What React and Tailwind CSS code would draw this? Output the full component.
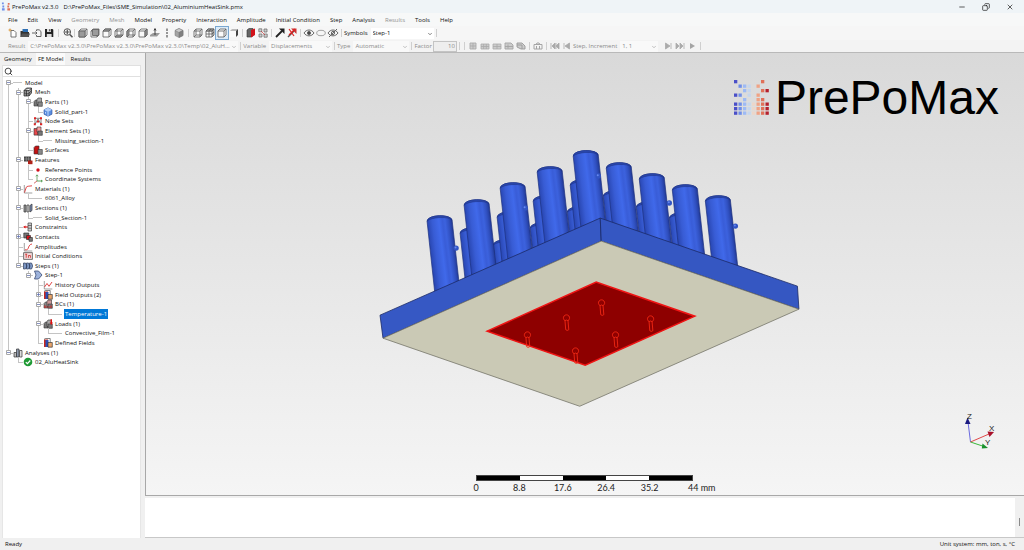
import React from "react";
import clsx from "clsx";
import { Search, Minus, Copy, X, ChevronDown } from "lucide-react";

const menus = [
  "File",
  "Edit",
  "View",
  "Geometry",
  "Mesh",
  "Model",
  "Property",
  "Interaction",
  "Amplitude",
  "Initial Condition",
  "Step",
  "Analysis",
  "Results",
  "Tools",
  "Help",
];
const disabledMenus = ["Geometry", "Mesh", "Results"];

const tree = [
  { d: 0, text: "Model", box: "-" },
  { d: 1, text: "Mesh", icon: "mesh", box: "-" },
  { d: 2, text: "Parts (1)", icon: "parts", box: "-" },
  { d: 3, text: "Solid_part-1", icon: "part" },
  { d: 2, text: "Node Sets", icon: "nodes" },
  { d: 2, text: "Element Sets (1)", icon: "elements", box: "-" },
  { d: 3, text: "Missing_section-1" },
  { d: 2, text: "Surfaces", icon: "surfaces" },
  { d: 1, text: "Features", icon: "features", box: "-" },
  { d: 2, text: "Reference Points", icon: "point" },
  { d: 2, text: "Coordinate Systems", icon: "axes" },
  { d: 1, text: "Materials (1)", icon: "curve", box: "-" },
  { d: 2, text: "6061_Alloy" },
  { d: 1, text: "Sections (1)", icon: "sections", box: "-" },
  { d: 2, text: "Solid_Section-1" },
  { d: 1, text: "Constraints", icon: "constraints" },
  { d: 1, text: "Contacts", icon: "contacts", box: "+" },
  { d: 1, text: "Amplitudes", icon: "amplitude" },
  { d: 1, text: "Initial Conditions", icon: "initial" },
  { d: 1, text: "Steps (1)", icon: "steps", box: "-" },
  { d: 2, text: "Step-1", icon: "step", box: "-" },
  { d: 3, text: "History Outputs", icon: "history" },
  { d: 3, text: "Field Outputs (2)", icon: "field", box: "+" },
  { d: 3, text: "BCs (1)", icon: "bcs", box: "-" },
  { d: 4, text: "Temperature-1", selected: true },
  { d: 3, text: "Loads (1)", icon: "loads", box: "-" },
  { d: 4, text: "Convective_Film-1" },
  { d: 3, text: "Defined Fields", icon: "field" },
  { d: 0, text: "Analyses (1)", icon: "analyses", box: "-" },
  { d: 1, text: "02_AluHeatSink", icon: "ok" },
];

// true when the branch line of a level goes on below row i
const continues = (i, level) => {
  for (let j = i + 1; j < tree.length; j++) {
    if (tree[j].d < level) return false;
    if (tree[j].d === level) return true;
  }
  return false;
};

const Blocks = ({ a, b, c }) => (
  <g stroke="#333" strokeWidth="0.6">
    <path d="M1 4.5 2.5 3H5v6H1z" fill={a} />
    <path d="M4 2.5 5 1h3.5v5.5l-1 1H4z" fill={b} />
    <path d="M5 5h4.3v4.3H5z" fill={c} />
  </g>
);

const treeIcons = {
  mesh: (
    <g stroke="#222" strokeWidth="0.7">
      <path d="M1 3.5h5v5.5H1zM6 3.5 8.5 1v5L6 9M1 3.5 3.5 1h5M1 6h5l2.5-2.5M3.5 3.5V9" fill="#8a8a8a" />
    </g>
  ),
  parts: <Blocks a="#777" b="#aaa" c="#888" />,
  part: (
    <g>
      <path d="M5 .8 9 2.8v4.4l-4 2-4-2V2.8z" fill="#5b8fe0" stroke="#2c4f9c" strokeWidth="0.6" />
      <path d="M5 .8 9 2.8 5 5 1 2.8z" fill="#b5d0f8" />
      <path d="M2.5 5v1.6M5 5v4" stroke="#dbe8ff" strokeWidth="0.8" />
    </g>
  ),
  nodes: (
    <g>
      <path d="M2 2.3h6v5.5M2 8.5 5 3l3 5M2 2v6" fill="none" stroke="#666" strokeWidth="0.8" />
      <path d="M1 1.2h2v2H1zM7 1.2h2v2H7zM.8 7.2h2v2h-2zM7 7.2h2.2v2H7zM4 4.6h2v2H4z" fill="#d22" />
    </g>
  ),
  elements: (
    <g stroke="#333" strokeWidth="0.6">
      <path d="M1 2.5h4v6.6H1z" fill="#e8484a" />
      <path d="M4 1h4v5H4z" fill="#f3a0a0" />
      <path d="M5 5h4.3v4.3H5z" fill="#777" />
    </g>
  ),
  surfaces: (
    <g stroke="#333" strokeWidth="0.6">
      <path d="M1 2.5 2.5 1H6v8H1z" fill="#c41212" />
      <path d="M5 4.5h4.3v4.8H5z" fill="#8a8a8a" />
    </g>
  ),
  features: (
    <g>
      <path d="M1 1.5h7v5H1z" fill="#444" />
      <path d="M1 4h7M3.3 1.5v5M5.6 1.5v5" stroke="#aaa" strokeWidth="0.5" />
      <path d="M5 5.5h4.5v3.7H5z" fill="#b02218" />
    </g>
  ),
  point: <circle cx="5" cy="5" r="1.7" fill="#d0101c" />,
  axes: (
    <g fill="none" strokeWidth="0.8">
      <path d="M4 7V1M2.8 2.3 4 .8l1.2 1.5" stroke="#5a9a5a" />
      <path d="M4 7h5.2M8 6l1.3 1L8 8.2" stroke="#3b8f3b" />
      <path d="M4 7 1 9.3" stroke="#c44" />
    </g>
  ),
  curve: (
    <g fill="none">
      <path d="M1.3 1v8h8" stroke="#777" strokeWidth="0.7" />
      <path d="M1.5 8.5 3.3 3.2C4 2 6 2.3 9 1.8" stroke="#d33" strokeWidth="0.9" />
    </g>
  ),
  sections: (
    <g stroke="#333" strokeWidth="0.7">
      <path d="M1 2h2v7H1z" fill="#999" />
      <path d="M4 2h2v7H4z" fill="#ddd" />
      <path d="M7 2.5 9 1v6.5L7 9z" fill="#7b8fb8" />
    </g>
  ),
  constraints: (
    <g>
      <path d="M1 5h4" stroke="#d22" strokeWidth="1.2" />
      <path d="M0 5l2.5-1.5v3z" fill="#d22" />
      <path d="M5 1h3.5v8H5zM5 3.5h3.5M5 6.2h3.5" fill="#ccc" stroke="#444" strokeWidth="0.7" />
    </g>
  ),
  contacts: (
    <g stroke="#222" strokeWidth="0.6">
      <path d="M.8 1h5v5h-5z" fill="#777" />
      <path d="M3.5 3.5h4v4h-4z" fill="#d8151b" />
      <path d="M6 5.5h3.4v3.8H6z" fill="#777" />
    </g>
  ),
  amplitude: (
    <g fill="none">
      <path d="M1.3 1v8h8" stroke="#777" strokeWidth="0.7" />
      <path d="M2 7.8h1.6C6 7.5 5 2.5 9 2" stroke="#d33" strokeWidth="0.9" />
    </g>
  ),
  initial: (
    <g fill="none" strokeWidth="0.8">
      <path d="M.6 1.6h8.8v6.8H.6z" stroke="#555" fill="#f3dada" />
      <path d="M2.2 3.2h2M3.2 3.2v3.6M5.4 4.5v2.3M7.4 4.5v2.3M5.4 4.5h2" stroke="#c22" />
    </g>
  ),
  steps: (
    <g fill="#7d97c4" stroke="#2f3d5c" strokeWidth="0.7">
      <path d="M.5 2h2L4 5 2.5 8h-2zM3.5 2h2L7 5 5.5 8h-2zM6.5 2h2L9.8 5 8.5 8h-2z" />
    </g>
  ),
  step: <path d="M1.5 1h4L9 5 5.5 9h-4L3 5z" fill="#9db3dc" stroke="#3b4d75" strokeWidth="0.8" />,
  history: (
    <g fill="none">
      <path d="M1.3 1v8h8" stroke="#777" strokeWidth="0.7" />
      <path d="M1.5 7 4 3.5l2 2.8L9 2" stroke="#d33" strokeWidth="0.9" />
    </g>
  ),
  field: (
    <g>
      <path d="M1 1.5h4V9H1z" fill="#c9281c" />
      <path d="M2.5 2h3v7h-3z" fill="#2d4fb5" />
      <path d="M5 4.5h4.3v4.7H5z" fill="#e8a46a" stroke="#222" strokeWidth="0.6" />
      <path d="M1 1.5 2.2.5h5v4" fill="none" stroke="#333" strokeWidth="0.6" />
    </g>
  ),
  bcs: (
    <g>
      <Blocks a="#888" b="#c99" c="#777" />
      <path d="M1 8h8M2 6v3M8 6v3" stroke="#c22" strokeWidth="0.7" />
    </g>
  ),
  loads: (
    <g>
      <Blocks a="#777" b="#aaa" c="#777" />
      <path d="M8.3.3v4" stroke="#d11" strokeWidth="1.4" />
      <path d="M6.6 3.6H10L8.3 6z" fill="#d11" />
    </g>
  ),
  analyses: (
    <g stroke="#333" strokeWidth="0.7">
      <path d="M1 4.5h2.5V9H1z" fill="#bbb" />
      <path d="M3.5 1H6v8H3.5z" fill="#8d99ad" />
      <path d="M6.5 2.5H9V9H6.5z" fill="#ddd" />
    </g>
  ),
  ok: (
    <g>
      <circle cx="5" cy="5" r="4.3" fill="#1f9a35" />
      <path d="M2.8 5.1 4.4 6.7 7.3 3.5" fill="none" stroke="#fff" strokeWidth="1.2" />
    </g>
  ),
};

const Cube = ({ shade, fill = "#9a9a9a", extra }) => (
  <g stroke="#5c5c5c" strokeWidth="0.8">
    <path d="M2 4h6v6H2zM2 4l2-2h6v6l-2 2M8 4l2-2" fill="#fafafa" />
    {shade && <path d={shade} fill={fill} />}
    {extra && <path d={extra} fill="none" />}
  </g>
);

const toolIcons = {
  New: (
    <g fill="#fff" stroke="#555" strokeWidth="0.8">
      <path d="M4 3.5h3L9 5.5V10H4z" />
      <path d="M3 1.5v3M1.5 3h3" stroke="#d98b1d" />
    </g>
  ),
  Open: (
    <g>
      <path d="M3.5 2H9v4H3.5z" fill="#2d6fb3" />
      <path d="M1.5 4h2l1 1H10v5H1.5z" fill="#333" />
      <path d="M3 6.5h8L9.5 10h-8z" fill="#555" />
    </g>
  ),
  Import: (
    <g fill="none" stroke="#555" strokeWidth="0.9">
      <path d="M5.5 4V2.8h2.7L10 4.5v5H5.5V8M1 6h5M4.5 4.5 6 6 4.5 7.5" />
    </g>
  ),
  Save: (
    <g>
      <path d="M2 2h7.5l.8.8V10H2z" fill="#222" />
      <path d="M4 2h4v3H4zM3.8 7h4.8v3H3.8z" fill="#ddd" />
      <path d="M6.3 2.3h1v2h-1z" fill="#222" />
    </g>
  ),
  "Zoom to fit": (
    <g fill="none" stroke="#555" strokeWidth="1">
      <circle cx="5.3" cy="5" r="3.3" />
      <path d="M5.3 2.5v5M2.8 5h5" strokeWidth="1.2" />
      <path d="M7.8 7.5l2.7 2.8" strokeWidth="1.6" />
    </g>
  ),
  Front: <Cube shade="M2 4h6v6H2z" />,
  Back: <Cube shade="M3.5 2.5h6v6h-6z" />,
  Top: <Cube shade="M2 4l2-2h6L8 4z" />,
  Bottom: <Cube shade="M2 10l2-2h6l-2 2z" extra="M4 2v6" />,
  Left: <Cube shade="M2 4l2-2v6l-2 2z" extra="M4 8h6" />,
  Right: <Cube shade="M8 4l2-2v6l-2 2z" />,
  "Normal view": (
    <g>
      <path d="M1 8l3-2h7L8 9.5H1z" fill="#9a9a9a" />
      <path d="M6 8V2M5 3.5l1-2 1 2" fill="none" stroke="#333" strokeWidth="0.9" />
    </g>
  ),
  "Vertical view": <path d="M6 1.5V4M6 5v2M6 8v2.5" stroke="#555" strokeWidth="1.2" />,
  Isometric: (
    <g stroke="#777" strokeWidth="0.5">
      <path d="M6 1.5l4 2v5l-4 2-4-2v-5z" fill="#a4a4a4" />
      <path d="M6 1.5l4 2-4 2-4-2z" fill="#ccc" />
      <path d="M6 5.5l4-2v5l-4 2z" fill="#808080" />
    </g>
  ),
  Wireframe: <Cube extra="M4 2v6h6M4 8l-2 2" />,
  "Element edges": <Cube extra="M5 4v6M2 7h6M7 2 5 4M8 7l2-2M3 3h6v6" shade="M2 4l2-2h6L8 4z" fill="#ccc" />,
  "Model edges": <Cube />,
  "No edges": (
    <g>
      <path d="M2 4l2-2h6L8 4z" fill="#bbb" />
      <path d="M8 4l2-2v6l-2 2z" fill="#444" />
      <path d="M2 4h6v6H2z" fill="#fbfbfb" />
    </g>
  ),
  "Section view": (
    <g>
      <path d="M2 3l2-1.5h4V9l-2 1H2z" fill="#666" stroke="#333" strokeWidth="0.6" />
      <path d="M6 3l4-1.5V8l-4 2.5z" fill="#d3121a" />
    </g>
  ),
  "Exploded view": (
    <g stroke="#666" strokeWidth="0.7">
      <path d="M1.8 1.8h3v3h-3zM7 2h3v3H7zM2 7h3v3H2zM7 7h3.2v3.2H7z" fill="#ccc" />
      <path d="M4 4l4 4" stroke="#c33" />
    </g>
  ),
  Query: (
    <g>
      <path d="M2 10l6-6" stroke="#222" strokeWidth="1.8" />
      <path d="M5 1.500h5.500V7z" fill="#222" />
    </g>
  ),
  "Remove annotations": (
    <g>
      <path d="M2 10l6-6" stroke="#555" strokeWidth="1.4" />
      <path d="M5 1.5h5.5V7z" fill="#c33" />
      <path d="M3 2l5 7M9 2 3 8" stroke="#e02020" strokeWidth="1.2" />
    </g>
  ),
  Show: (
    <g fill="none" stroke="#666" strokeWidth="1">
      <path d="M1 6c2.5-4 7.5-4 10 0-2.500 3.800-7.500 3.800-10 0z" />
      <circle cx="6" cy="6" r="1.600" fill="#444" />
    </g>
  ),
  Hide: <ellipse cx="6" cy="6" rx="4.3" ry="2.7" fill="none" stroke="#999" strokeWidth="0.9" />,
  Invert: (
    <g fill="none" stroke="#666" strokeWidth="1">
      <path d="M1 6c2.5-4 7.5-4 10 0-2.500 3.800-7.500 3.800-10 0z" />
      <circle cx="6" cy="6" r="1.600" />
      <path d="M2 10l8-8" />
    </g>
  ),
  "Original shape": <path d="M3 3h6v6H3zM3 6h6M6 3v6" fill="#ccc" stroke="#aaa" strokeWidth="0.9" />,
  Undeformed: <path d="M2 4h8v5H2zM2 6.5h8M4.600 4v5M7.300 4v5" fill="#ccc" stroke="#aaa" strokeWidth="0.8" />,
  Deformed: <path d="M2 4h8v5H2zM2 6.5h8M6 4v5" fill="#ccc" stroke="#aaa" strokeWidth="0.8" />,
  "Color contours": <path d="M2 4.5V9h8V5L8 3H2zM2 6.5h8M5 4.5v4" fill="#ccc" stroke="#a4a4a4" strokeWidth="0.9" />,
  Wire: <path d="M2 3h5l3 3v3H6L2 7zM2 5h5v4" fill="#ccc" stroke="#999" strokeWidth="0.9" />,
  Animate: <path d="M2 4.5h8V9H2zM4 4.5 5 3h2l1 1.500M4.500 6v3M7.500 6v3" fill="none" stroke="#a4a4a4" strokeWidth="1" />,
  First: <path d="M2 3v6M6 3v6L3 6zM10 3v6L7 6zM7 3v6" fill="#aaa" stroke="#aaa" strokeWidth="0.8" />,
  Previous: <path d="M3 3v6M8.5 3v6L4 6z" fill="#aaa" stroke="#aaa" strokeWidth="0.8" />,
  Next: <path d="M9 3v6M3.5 3v6L8 6z" fill="#aaa" stroke="#aaa" strokeWidth="0.8" />,
  Last: <path d="M10 3v6M2 3v6l3-3zM6 3v6l3-3z" fill="#aaa" stroke="#aaa" strokeWidth="0.8" />,
  Play: <path d="M4 3v6l5-3z" fill="#a4a4a4" />,
};

const Tool = ({ name, active, disabled }) => (
  <button
    type="button"
    aria-label={name}
    disabled={disabled}
    className={clsx("h-3 w-3 shrink-0", active && "bg-[#dcebf8] outline outline-[#7aa7d0]")}
  >
    <svg viewBox="0 0 12 12" className="h-3 w-3">
      {toolIcons[name]}
    </svg>
  </button>
);

const Sep = () => <div className="mx-[2px] h-2 w-px shrink-0 bg-[#cfcfcf]" />;

const Combo = ({ id, label, value, width, disabled }) => (
  <>
    <label htmlFor={id} className="shrink-0">
      {label}
    </label>
    <div className={clsx("relative ml-[3px] shrink-0", width, disabled ? "bg-[#f9f9f9]" : "bg-white")}>
      <select
        id={id}
        disabled={disabled}
        className="block h-[11px] w-full appearance-none truncate pr-2 pl-[2px] opacity-100"
      >
        <option>{value}</option>
      </select>
      <ChevronDown className="pointer-events-none absolute top-[3px] right-px h-[6px] w-[6px]" />
    </div>
  </>
);

const logo = ["0.....6.", ".123.5..", "..23..67", "01.3.5..", "..2..56.", "01234567", "01234567", "01234567"];
const logoColors = ["#4a4fc8", "#6f8ee8", "#9dbaf5", "#c5d6ee", "#ecd6c9", "#f0a284", "#e07058", "#b5202c"];

const Logo = () => (
  <div className="absolute top-[19px] right-[25px] flex items-center gap-[6px]">
    <svg viewBox="0 0 35 36" className="h-9 w-[35px]" role="img" aria-label="logo">
      {logo.map((row, y) =>
        [...row].map(
          (c, x) =>
            c !== "." && (
              <rect key={`${x}-${y}`} x={x * 4.5} y={y * 4.5} width="3.3" height="3.3" fill={logoColors[c]} />
            )
        )
      )}
    </svg>
    <span className="font-['Liberation_Sans',sans-serif] text-[48px] leading-[52px] text-black">PrePoMax</span>
  </div>
);

// back rows first, so the front ones cover them
const pins = [
  [493, 244],
  [530, 227],
  [567, 211],
  [460, 232],
  [497, 216],
  [533, 200],
  [570, 184],
  [603, 195],
  [636, 206],
  [669, 217],
  [427, 220],
  [464, 204],
  [500, 187],
  [537, 171],
  [606, 167],
  [639, 178],
  [672, 189],
  [705, 200],
  [573, 155],
];
const balls = [
  [456, 248],
  [525, 208],
  [598, 176],
  [669, 203],
  [735, 226],
];
const symbols = [
  [601, 303],
  [566, 318],
  [650, 319],
  [615, 335],
  [527, 335],
  [575, 351],
];

const HeatSink = () => (
  <svg viewBox="379 148 421 260" className="mt-2 ml-[9px] w-[48%]" role="img" aria-label="Heat sink">
    <defs>
      <linearGradient id="pin" gradientUnits="userSpaceOnUse" x1="0" y1="0" x2="25" y2="-3">
        <stop offset="0" stopColor="#2a48b4" />
        <stop offset="0.2" stopColor="#385cd4" />
        <stop offset="0.46" stopColor="#4069ea" />
        <stop offset="0.6" stopColor="#395dd8" />
        <stop offset="0.7" stopColor="#3c62de" />
        <stop offset="0.85" stopColor="#3050c0" />
        <stop offset="1" stopColor="#1f3690" />
      </linearGradient>
    </defs>
    {pins.map(([x, y]) => (
      <g key={`${x}-${y}`} transform={`translate(${x} ${y})`}>
        <path d="M0 1C1-6 24-6 25 0L33 72 8 75z" fill="url(#pin)" stroke="#1d3080" strokeWidth="0.7" />
        <path d="M0 1C1-6 24-6 25 0 22-4 4-3 0 1z" fill="#2b48ae" stroke="#1d3080" strokeWidth="0.5" />
      </g>
    ))}
    {balls.map(([x, y]) => (
      <g key={x}>
        <circle cx={x} cy={y} r="2.7" fill="#3154c4" />
        <circle cx={x - 0.5} cy={y - 0.7} r="1" fill="#6688ee" />
      </g>
    ))}
    <g stroke="#1c2b66" strokeWidth="0.8" strokeLinejoin="round">
      <path d="M380 315 600 218 601 241 383 338z" fill="#3658c4" />
      <path d="M600 218 797 286 798.5 309 601 241z" fill="#3557c2" />
    </g>
    <path d="M383 338 601 241 798.5 309 579.5 406z" fill="#cac9b5" stroke="#77776c" strokeWidth="0.8" />
    <path d="M487 331 596 282 694.5 316 585 365z" fill="#8e0000" stroke="#f01414" strokeWidth="1.5" />
    {symbols.map(([x, y]) => (
      <path
        key={x}
        transform={`translate(${x} ${y})`}
        d="M-1.2 2.5A3.1 3.1 0 1 1 1.8 2.5L2.6 11.5Q1 13-.5 11.5zM-1.2 2.5Q0 1.2 1.8 2.5"
        fill="none"
        stroke="#f02814"
        strokeWidth="0.9"
      />
    ))}
  </svg>
);

const Triad = () => (
  <svg viewBox="960 408 40 44" className="absolute right-6 bottom-[42px] h-11 w-10" role="img" aria-label="Axes">
    <path d="M970.5 441 968 421" stroke="#6a6ae0" />
    <path d="M970.5 441 989 433" stroke="#e04848" />
    <path d="M970.5 441 984 445.5" stroke="#3cb83c" />
    <path d="M967.5 416.5l3 6.500h-5.500z" fill="#1a1a80" />
    <path d="M994 431l-6.500-.5 2 5.500z" fill="#a8102a" />
    <path d="M988 447l-5.500-4.500-.7 5z" fill="#18902c" />
    <g fill="#222" fontFamily="Liberation Sans, sans-serif" fontSize="8">
      <text x="967" y="418">Z</text>
      <text x="989" y="430">X</text>
      <text x="985" y="444">Y</text>
    </g>
  </svg>
);

const ScaleBar = () => (
  <div className="absolute bottom-px left-[330px] w-[217px] font-['Lato',sans-serif] text-[9px] leading-3 text-[#222]">
    <div className="flex h-[6px] border border-[#444]">
      {["bg-black", "bg-white", "bg-black", "bg-white", "bg-black"].map((bg, i) => (
        <div key={i} className={clsx("flex-1", bg)} />
      ))}
    </div>
    <div className="mt-px flex justify-between">
      {["0", "8.8", "17.6", "26.4", "35.2"].map((t) => (
        <span key={t} className="flex w-0 justify-center">
          {t}
        </span>
      ))}
      <span className="-ml-[5px] flex w-[5px] whitespace-nowrap">44 mm</span>
    </div>
  </div>
);

const TreeRow = ({ row, i }) => (
  <li className="flex min-h-0 items-stretch">
    {Array.from({ length: row.d + 1 }, (_, level) => {
      const own = level === row.d;
      const down = continues(i, level);
      return (
        <span key={level} className="relative w-[10px] shrink-0">
          {(own || down) && (
            <span
              className={clsx(
                "absolute left-[5px] w-px bg-[#c4c4c4]",
                i === 0 ? "top-1/2" : "top-0",
                down ? "bottom-0" : "bottom-1/2"
              )}
            />
          )}
          {own && <span className="absolute top-1/2 right-0 left-[5px] h-px bg-[#c4c4c4]" />}
          {own && row.box && (
            <svg viewBox="0 0 5 5" className="absolute top-[2px] left-[3px] h-[5px] w-[5px]">
              <path d="M.5.5h4v4h-4z" fill="#fff" stroke="#a8a8a8" />
              <path d={row.box === "+" ? "M1 2.5h3M2.5 1v3" : "M1 2.5h3"} stroke="#5566aa" strokeWidth="0.7" />
            </svg>
          )}
        </span>
      );
    })}
    <span className="flex w-[11px] shrink-0 items-center">
      {row.icon ? (
        <svg viewBox="0 0 10 10" className="h-[10px] w-[10px] shrink-0">
          {treeIcons[row.icon]}
        </svg>
      ) : (
        <span className="h-px w-[9px] bg-[#c4c4c4]" />
      )}
    </span>
    <span className={clsx("flex items-center px-px whitespace-nowrap", row.selected && "bg-[#0078d7] text-white")}>
      {row.text}
    </span>
  </li>
);

const App = () => {
  return (
    <div className="flex h-screen flex-col overflow-hidden bg-[#f0f0f0] font-['Open_Sans',sans-serif] text-[6px] leading-[10px] text-[#111]">
      {/* title bar */}
      <header className="flex h-[13px] shrink-0 items-center bg-[#eff4f7]">
        <svg viewBox="0 0 10 10" className="mx-[1px] h-[9px] w-[10px]">
          <path d="M.5.5h2v2h-2zM1 4h2v2H1zM.5 7h3v2.5h-3z" fill="#6f8ee8" />
          <path d="M7 1h2v2H7zM6.5 4h2v2h-2zM6.5 7h3v2.5h-3z" fill="#e07058" />
        </svg>
        <h1 className="flex gap-[5px]">
          <span>PrePoMax v2.3.0</span>
          <span>D:\PrePoMax_Files\SME_Simulation\02_AluminiumHeatSink.pmx</span>
        </h1>
        <div className="ml-auto flex gap-4 pr-[10px]">
          <button type="button" aria-label="Minimize">
            <Minus className="h-2 w-2" />
          </button>
          <button type="button" aria-label="Restore">
            <Copy className="h-2 w-2 -scale-x-100" />
          </button>
          <button type="button" aria-label="Close">
            <X className="h-2 w-2" />
          </button>
        </div>
      </header>

      {/* menu */}
      <nav className="flex h-[13px] shrink-0 items-center gap-[10px] bg-[#f7f8f8] pl-2">
        {menus.map((m) => (
          <button key={m} type="button" className={clsx(disabledMenus.includes(m) && "text-[#929292]")}>
            {m}
          </button>
        ))}
      </nav>

      {/* toolbars */}
      <div className="flex h-[14px] shrink-0 items-center bg-[#f6f6f6] pl-[7px]">
        {["New", "Open", "Import", "Save"].map((n) => (
          <Tool key={n} name={n} />
        ))}
        <div className="px-px">
          <Sep />
        </div>
        <Tool name="Zoom to fit" />
        <div className="mr-[2px] h-2 w-px bg-[#cfcfcf]" />
        {["Front", "Back", "Top", "Bottom", "Left", "Right", "Normal view", "Vertical view", "Isometric"].map((n) => (
          <Tool key={n} name={n} />
        ))}
        <div className="px-px">
          <Sep />
        </div>
        {["Wireframe", "Element edges", "Model edges", "No edges"].map((n) => (
          <Tool key={n} name={n} active={n === "Model edges"} />
        ))}
        <Sep />
        <Tool name="Section view" />
        <Tool name="Exploded view" />
        <Sep />
        <Tool name="Query" />
        <Tool name="Remove annotations" />
        <Sep />
        <Tool name="Show" />
        <Tool name="Hide" />
        <Tool name="Invert" />
        <Sep />
        <Combo id="symbols" label="Symbols" value="Step-1" width="w-[63px]" />
        <Sep />
      </div>
      <div className="flex h-[13px] shrink-0 items-center border-b border-[#b9b9b9] bg-[#f3f3f3] pl-2 text-[#8a8a8a]">
        <Combo
          id="result"
          label="Result"
          value="C:\PrePoMax v2.3.0\PrePoMax v2.3.0\PrePoMax v2.3.0\Temp\02_AluHeatSink.frd"
          width="w-[210px]"
          disabled
        />
        <Sep />
        <Combo id="variable" label="Variable" value="Displacements" width="w-[63px]" disabled />
        <Sep />
        <Combo id="type" label="Type" value="Automatic" width="w-[56px]" disabled />
        <Sep />
        <label htmlFor="factor">Factor</label>
        <input
          id="factor"
          disabled
          defaultValue="10"
          className="ml-px h-[11px] w-6 border border-[#c4c4c4] bg-[#eee] px-px text-right"
        />
        <Sep />
        <Sep />
        {["Original shape", "Undeformed", "Deformed", "Color contours", "Wire"].map((n) => (
          <Tool key={n} name={n} disabled />
        ))}
        <Sep />
        <Tool name="Animate" disabled />
        <Sep />
        <Tool name="First" disabled />
        <Tool name="Previous" disabled />
        <Combo id="increment" label="Step, Increment" value="1, 1" width="w-[38px]" disabled />
        <div className="ml-1 flex">
          <Tool name="Next" disabled />
          <Tool name="Last" disabled />
          <Tool name="Play" disabled />
        </div>
        <Sep />
      </div>

      <main className="flex min-h-0 flex-1">
        {/* model tree */}
        <aside className="flex w-[145px] shrink-0 flex-col pr-1 pl-[2px]">
          <div className="flex h-3 shrink-0 items-center">
            <button type="button" className="px-[2px]">
              Geometry
            </button>
            <button type="button" className="ml-[2px] h-3 bg-[#fafafa] px-[2px] pb-px">
              FE Model
            </button>
            <button type="button" className="px-[5px]">
              Results
            </button>
          </div>
          <div className="flex h-3 shrink-0 items-center border border-[#e0e0e0] bg-white">
            <Search className="ml-px h-[9px] w-[9px]" />
            <input aria-label="Search" className="min-w-0 flex-1 outline-none" />
          </div>
          <div className="flex-1 border-x border-[#e6e6e6] bg-white pt-px">
            <ul className="grid h-[289px] auto-rows-fr">
              {tree.map((row, i) => (
                <TreeRow key={i} row={row} i={i} />
              ))}
            </ul>
          </div>
        </aside>

        <section className="flex min-w-0 flex-1 flex-col">
          {/* 3D view */}
          <div className="relative flex min-h-0 flex-1 items-center justify-center border-b border-l border-[#a8a8a8] bg-linear-to-b from-[#d9d9d9] to-[#f5f5f5]">
            <HeatSink />
            <Logo />
            <Triad />
            <ScaleBar />
          </div>
          {/* output */}
          <div className="mt-[2px] flex h-10 shrink-0 border-b border-[#c8c8c8]">
            <textarea readOnly aria-label="Output" className="flex-1 resize-none bg-white outline-none" />
            <div className="flex w-[9px] justify-center bg-[#f0f0f0] pt-5">
              <div className="h-2 w-px bg-[#8a8a8a]" />
            </div>
          </div>
        </section>
      </main>

      <footer className="flex h-3 shrink-0 items-center justify-between pr-[9px] pl-[5px]">
        <span>Ready</span>
        <span>Unit system: mm, ton, s, °C</span>
      </footer>
    </div>
  );
};

export default App;
